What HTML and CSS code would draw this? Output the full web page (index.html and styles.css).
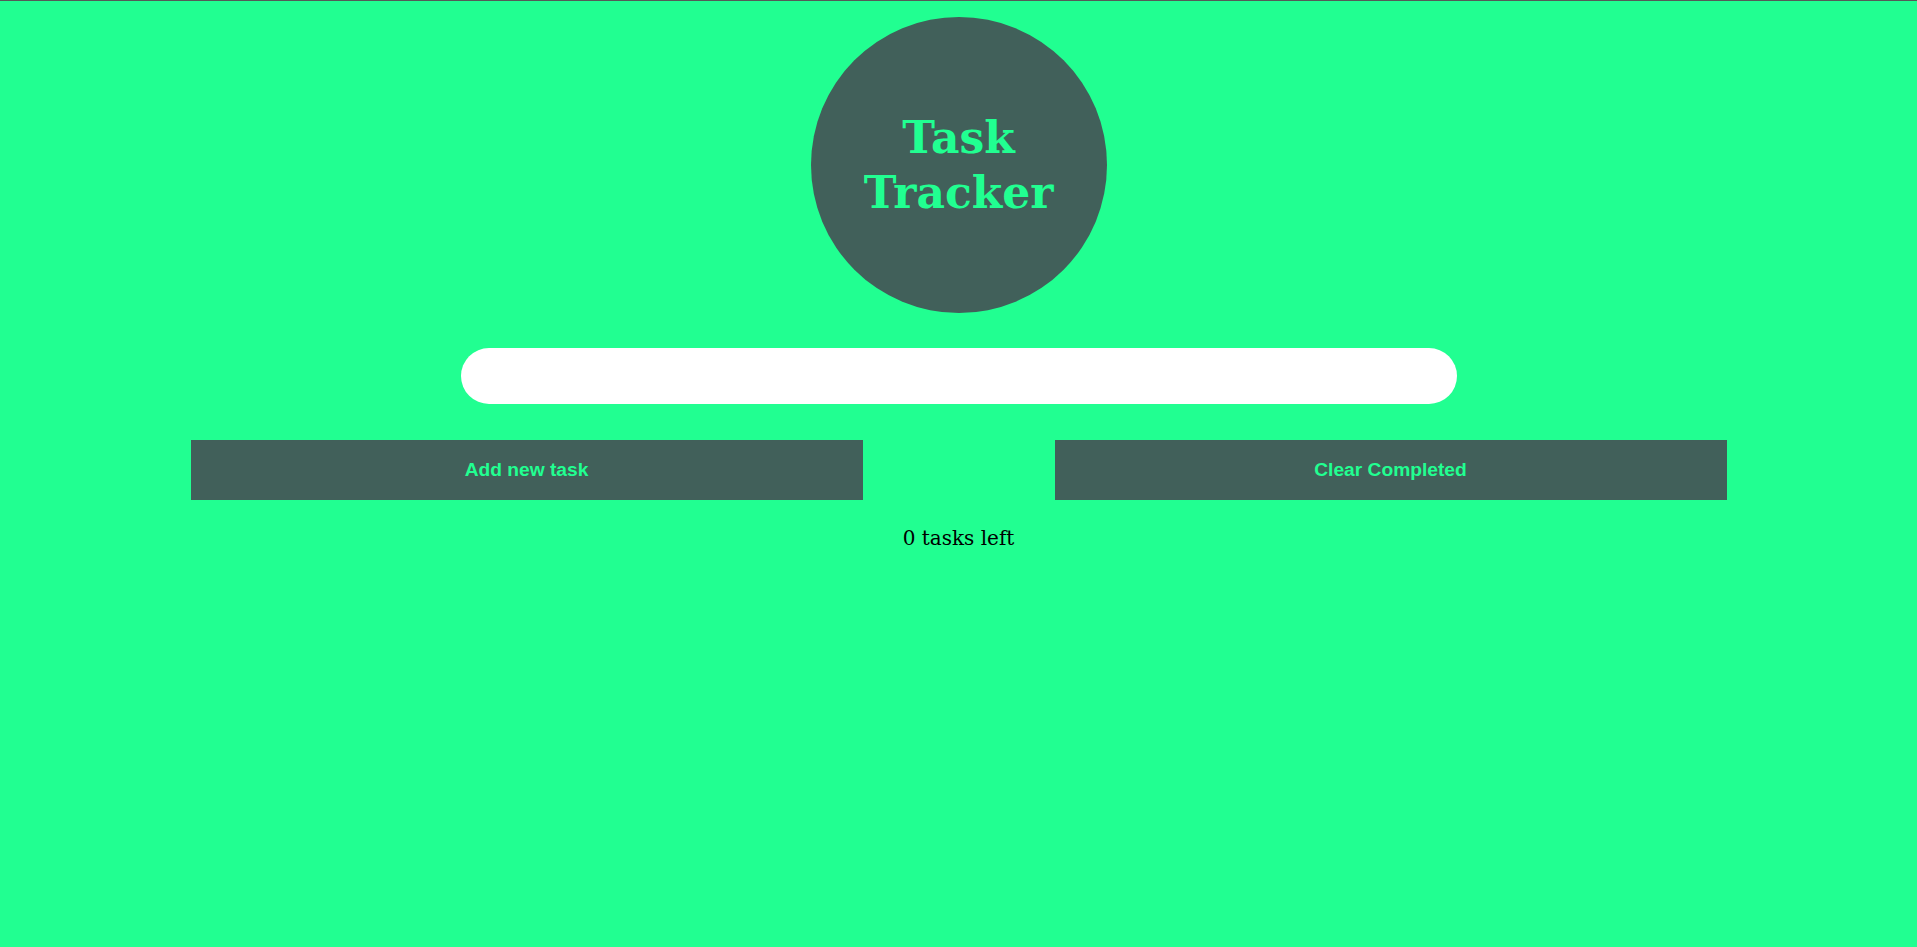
FILE: index.html
```html
<!DOCTYPE html>
<html>
<head>
<meta charset="utf-8">
<title>Task Tracker</title>
<link rel="stylesheet" href="styles.css">
</head>
<body>
<div class="app">
  <header class="logo">
    <h1 class="logo-title">Task<br>Tracker</h1>
  </header>
  <input class="task-input" type="text">
  <div class="actions">
    <button class="btn">Add new task</button>
    <button class="btn">Clear Completed</button>
  </div>
  <p class="count">0 tasks left</p>
</div>
</body>
</html>
```
FILE: styles.css
```css
html, body {
  margin: 0;
  padding: 0;
  background: #21ff91;
  height: 100%;
}
body {
  border-top: 1px solid #555a58;
  box-sizing: border-box;
}
.app {
  display: flex;
  flex-direction: column;
  align-items: center;
}
.logo {
  width: 296px;
  height: 296px;
  margin-top: 16px;
  border-radius: 50%;
  background: #41605a;
  display: flex;
  align-items: center;
  justify-content: center;
}
.logo-title {
  margin: 0;
  font-family: "DejaVu Serif", Georgia, serif;
  font-weight: bold;
  font-size: 44px;
  line-height: 55px;
  color: #21ff91;
  text-align: center;
}
.task-input {
  margin-top: 35px;
  width: 996px;
  height: 56px;
  box-sizing: border-box;
  border: none;
  border-radius: 28px;
  background: #ffffff;
  outline: none;
  padding: 0 28px;
  font-size: 20px;
}
.actions {
  margin-top: 36px;
  width: 100%;
  display: flex;
  justify-content: center;
  gap: 192px;
}
.btn {
  width: 672px;
  height: 60px;
  border: none;
  background: #41605a;
  color: #21ff91;
  font-family: "Liberation Sans", Arial, sans-serif;
  font-weight: bold;
  font-size: 19.2px;
  padding: 0;
}
.count {
  margin: 24px 0 0;
  font-family: "DejaVu Serif", Georgia, serif;
  font-size: 20px;
  line-height: 28px;
  color: #000;
}
```
